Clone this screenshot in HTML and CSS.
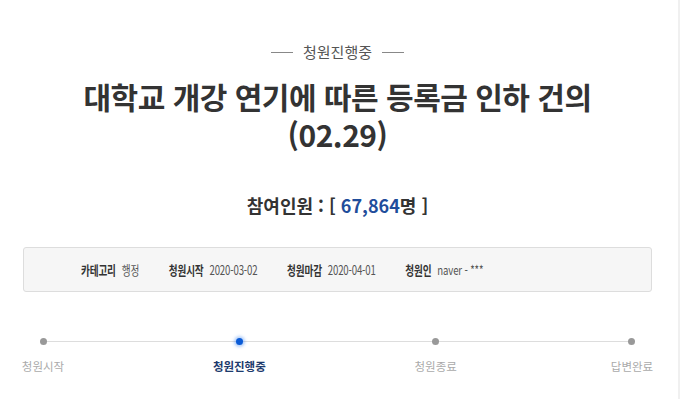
FILE: index.html
```
<!DOCTYPE html>
<html lang="ko">
<head>
    <meta charset="UTF-8">
    <meta name="viewport" content="width=device-width, initial-scale=1.0">
    <title>청원 상세</title>
    <link rel="stylesheet" href="styles.css">
</head>
<body>
    <div class="petition">
        <div class="status"><span class="dash"></span>청원진행중<span class="dash"></span></div>
        <h1 class="title">대학교 개강 연기에 따른 등록금 인하 건의<br>(02.29)</h1>
        <p class="count">참여인원 : [ <span class="num">67,864</span>명 ]</p>

        <div class="info">
            <ul class="info-list">
                <li><strong>카테고리</strong>행정</li>
                <li><strong>청원시작</strong>2020-03-02</li>
                <li><strong>청원마감</strong>2020-04-01</li>
                <li><strong>청원인</strong>naver - ***</li>
            </ul>
        </div>

        <ol class="steps">
            <li class="step"><span class="dot"></span>청원시작</li>
            <li class="step active"><span class="dot"></span>청원진행중</li>
            <li class="step"><span class="dot"></span>청원종료</li>
            <li class="step"><span class="dot"></span>답변완료</li>
        </ol>
    </div>
</body>
</html>
```

FILE: styles.css
```
body {
    margin: 0;
    background-color: #fff;
    font-family: "Noto Sans CJK KR", "Noto Sans", sans-serif;
    color: #333;
    border-right: 2px solid #f0f0f0;
    min-height: 399px;
    box-sizing: border-box;
}
.petition {
    width: 629px;
    padding: 41px 0 0 23px;
}
.status {
    display: flex;
    justify-content: center;
    align-items: center;
    gap: 10px;
    font-size: 15px;
    line-height: 22px;
    color: #555;
}
.status .dash {
    width: 22px;
    height: 1px;
    background-color: #888;
}
.title {
    margin: 14px 0 0;
    text-align: center;
    font-size: 30px;
    line-height: 38px;
    font-weight: 700;
    color: #333;
    letter-spacing: -0.5px;
}
.count {
    margin: 40px 0 0;
    text-align: center;
    font-size: 18px;
    line-height: 24px;
    font-weight: 700;
    color: #333;
}
.count .num {
    color: #1f4d9b;
}
.info {
    margin: 30px 0 0;
    padding: 0 0 0 57px;
    height: 43px;
    display: flex;
    align-items: center;
    background-color: #f6f6f6;
    border: 1px solid #ddd;
    border-radius: 3px;
}
.info-list {
    list-style: none;
    margin: 0;
    padding: 0;
    display: flex;
    gap: 40px;
    font-size: 13px;
    color: #555;
    letter-spacing: -0.2px;
    white-space: nowrap;
    transform: scaleX(0.74);
    transform-origin: left center;
}
.info-list strong {
    color: #333;
    margin-right: 8px;
}
.steps {
    list-style: none;
    margin: 43px 0 0;
    padding: 0;
    display: flex;
    justify-content: space-between;
    position: relative;
}
.steps::before {
    content: "";
    position: absolute;
    left: 20px;
    right: 20px;
    top: 6px;
    height: 1px;
    background-color: #ddd;
}
.step {
    width: 40px;
    display: flex;
    flex-direction: column;
    align-items: center;
    gap: 12px;
    white-space: nowrap;
    font-size: 11.5px;
    line-height: 18px;
    color: #aaa;
}
.dot {
    position: relative;
    width: 7px;
    height: 7px;
    margin-top: 3px;
    border-radius: 50%;
    background-color: #999;
}
.step.active {
    color: #1d3b6e;
    font-weight: 700;
}
.step.active .dot {
    background-color: #0a5bd6;
    box-shadow: 0 0 3px 2px rgba(40, 120, 240, 0.35);
}
```
